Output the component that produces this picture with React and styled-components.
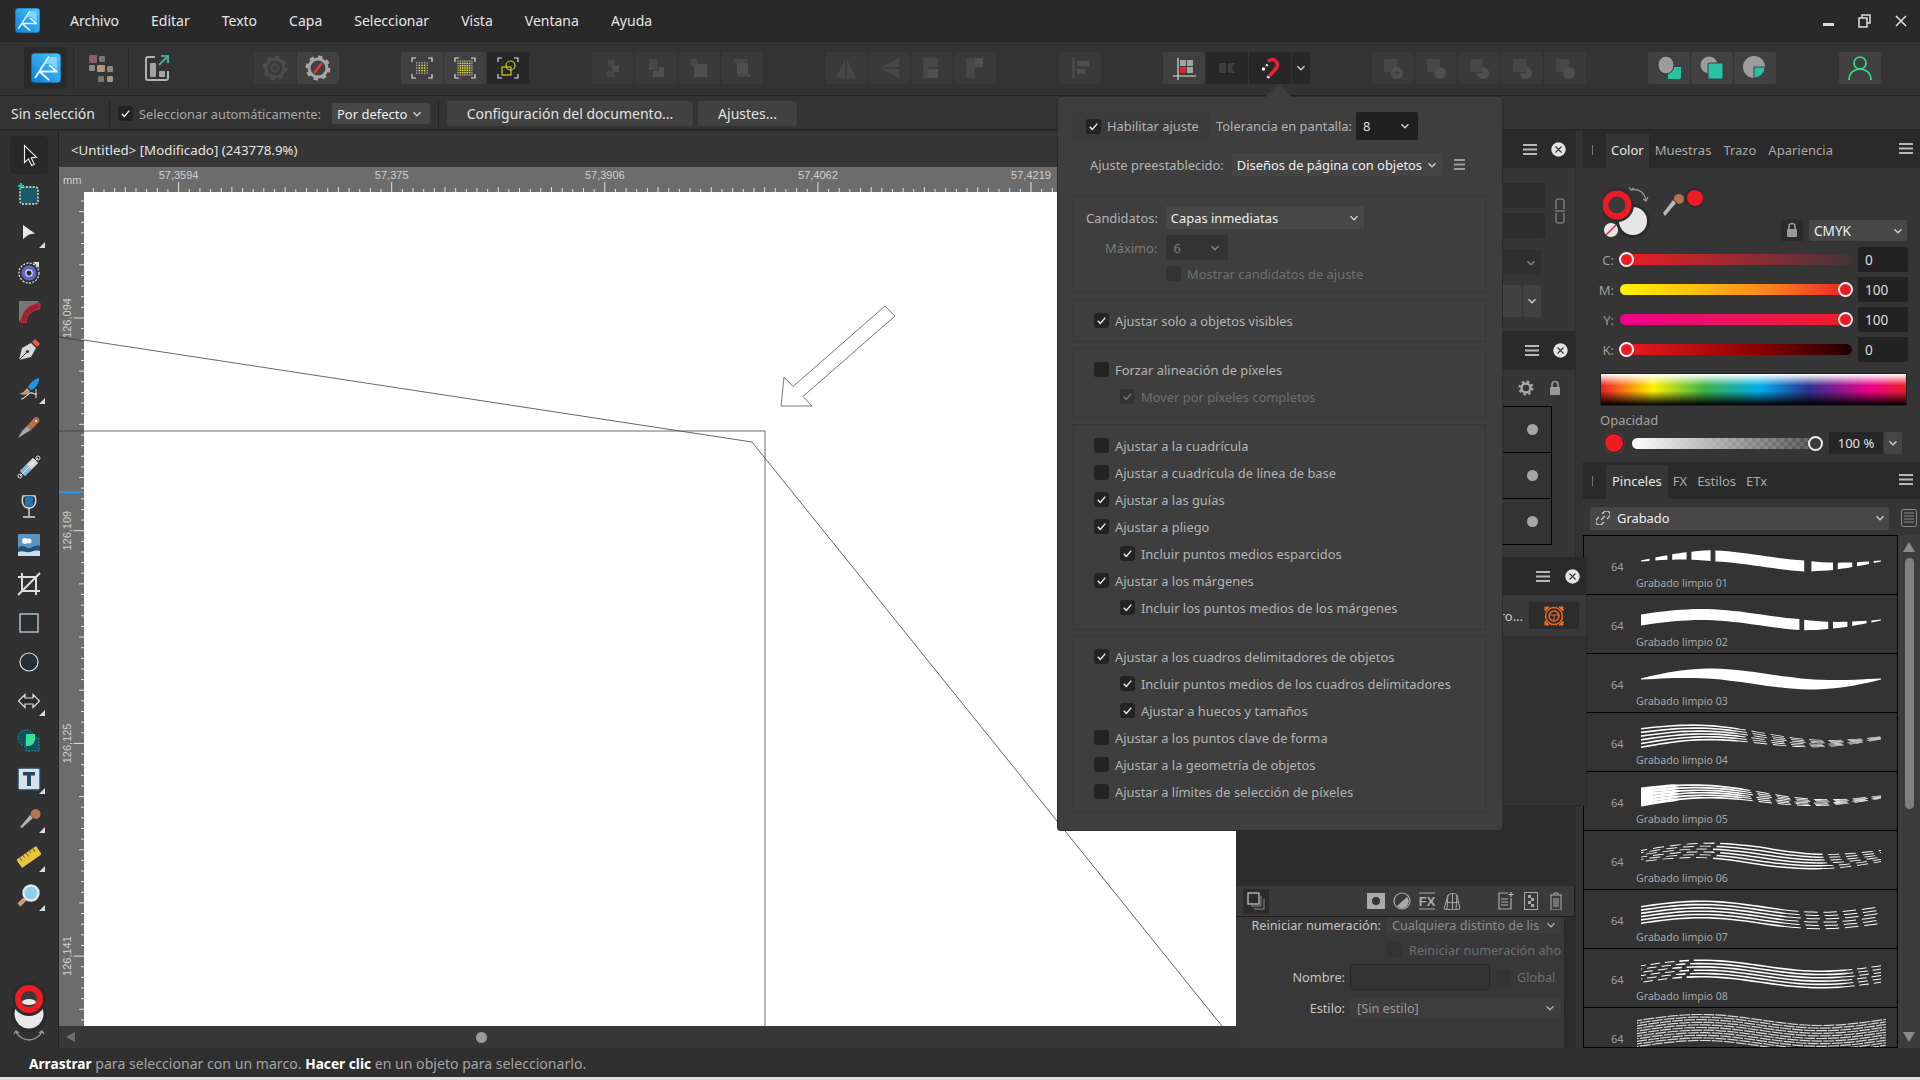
import React from "react";
import styled, { createGlobalStyle, css } from "styled-components";

const FONT = `"Noto Sans", "Open Sans", "Liberation Sans", sans-serif`;

const Global = createGlobalStyle`
  html, body { margin: 0; padding: 0; background: #333; overflow: hidden; }
  * { box-sizing: border-box; }
  body { font-family: ${FONT}; }
`;

const Page = styled.div`
  position: relative; width: 1920px; height: 1080px; overflow: hidden;
  display: flex; flex-direction: column; background: #333; color: #c8c8c8;
  font-family: ${FONT}; font-size: 12.9px;
`;

/* ---------- title bar ---------- */
const TitleBar = styled.header`
  height: 41px; flex: none; background: #292929; display: flex; align-items: center; padding-left: 15px;
`;
const Menu = styled.nav`
  display: flex; gap: 32px; margin-left: 30px; font-size: 14px; color: #e6e6e6;
`;
const WindowButtons = styled.div`
  margin-left: auto; display: flex; align-items: center; gap: 22px; padding-right: 12px;
`;

/* ---------- tool bar ---------- */
const Toolbar = styled.div`
  height: 55px; flex: none; background: #333; border-top: 1px solid #242424; border-bottom: 1px solid #222;
  display: flex; align-items: center; padding: 0 0 1px 24px;
`;
const BrandCell = styled.div`
  width: 43px; height: 42px; background: #2a2a2a; border-radius: 3px; display: flex; align-items: center; justify-content: center;
`;
const ToolSep = styled.div`
  width: 1px; height: 42px; background: #282828; margin: 0 14px 0 6px;
  ${p => p.$wide && css`margin: 0 15px 0 14px;`}
`;
const Group = styled.div`
  display: flex; gap: 1px; margin-left: ${p => p.$ml || 0}px;
`;
const TB = styled.div`
  width: ${p => p.$w || 42}px; height: 32px; border-radius: 2px; display: flex; align-items: center; justify-content: center;
  background: ${p => (p.$v === "off" ? "#3a3a3a" : p.$v === "dark" ? "#272727" : "#404040")};
`;

/* ---------- context bar ---------- */
const ContextBar = styled.div`
  height: 35px; flex: none; background: #333; border-bottom: 2px solid #262626;
  display: flex; align-items: center; padding: 2px 0 0 11px; font-size: 14px;
`;
const CtxStrong = styled.span`
  width: 83px; flex: none; color: #e2e2e2; white-space: nowrap;
`;
const CtxAuto = styled.span`
  width: 182px; flex: none; margin-left: 6px; color: #a8a8a8; font-size: 12.8px; white-space: nowrap;
`;
const CtxSep = styled.div`
  width: 1px; height: 26px; background: #242424; margin: 0 ${p => p.$r || 8}px 0 ${p => p.$l || 8}px;
`;
const CtxBtn = styled.div`
  height: 25px; background: #414141; border-radius: 2px; display: flex; align-items: center; justify-content: center;
  width: ${p => p.$w}px; margin-left: ${p => p.$ml || 0}px; color: #e2e2e2;
`;
const Muted = styled.span`
  color: ${p => p.$c || "#a8a8a8"}; margin-left: ${p => p.$ml || 0}px; white-space: nowrap;
`;

/* ---------- common controls ---------- */
const Box = styled.span`
  width: 15px; height: 15px; flex: none; border-radius: 3px; background: ${p => (p.$dis ? "#333" : "#232323")};
  display: inline-flex; align-items: center; justify-content: center;
`;
const Select = styled.div`
  display: flex; align-items: center; justify-content: space-between; flex: none;
  width: ${p => p.$w}px; height: ${p => p.$h || 23}px; padding: 0 ${p => p.$pr || 7}px 0 ${p => p.$pl || 5}px;
  margin-left: ${p => p.$ml || 0}px; border-radius: 2px; white-space: nowrap; overflow: hidden;
  background: ${p => p.$bg || "#474747"}; color: ${p => p.$c || "#eee"}; font-size: ${p => p.$fs || 12.9}px;
`;
const Check = ({ on, dis }) => (
  <Box $dis={dis}>
    {on && <svg width="11" height="11" viewBox="0 0 11 11"><path d="M1.8 5.8 4.3 8.4 9.3 2.6" fill="none" stroke={dis ? "#777" : "#eee"} strokeWidth="1.4" /></svg>}
  </Box>
);
const Chev = ({ c = "#ccc", s = 12 }) => (
  <svg width={s} height={s} viewBox="0 0 12 12" style={{ flex: "none" }}><path d="M2.5 4.2 6 7.8 9.5 4.2" fill="none" stroke={c} strokeWidth="1.4" /></svg>
);
const Burger = ({ c = "#b8b8b8", w = 14 }) => (
  <svg width={w} height="13" viewBox="0 0 14 13" style={{ flex: "none" }} preserveAspectRatio="none"><path d="M0 2h14M0 6.5h14M0 11h14" stroke={c} strokeWidth="2" /></svg>
);
const CloseDot = () => (
  <svg width="15" height="15" viewBox="0 0 15 15" style={{ flex: "none" }}><circle cx="7.5" cy="7.5" r="7.2" fill="#e4e4e4" /><path d="M4.5 4.5l6 6M10.5 4.5l-6 6" stroke="#333" strokeWidth="1.1" /></svg>
);

/* ---------- main ---------- */
const Main = styled.main`
  height: 917px; flex: none; display: flex; min-height: 0;
`;
const Tools = styled.aside`
  width: 59px; flex: none; background: #313131; border-right: 1px solid #232323; display: flex; flex-direction: column; align-items: center;
  padding-top: 5px; gap: 1px; padding-right: 1px;
`;
const ToolBtn = styled.div`
  position: relative; width: 38px; height: 38px; flex: none; border-radius: 4px; display: flex; align-items: center; justify-content: center;
  background: ${p => (p.$sel ? "#282828" : "transparent")};
  ${p => p.$fly && css`&::after {
    content: ""; position: absolute; right: 3px; bottom: 4px; width: 0; height: 0;
    border-left: 6px solid transparent; border-bottom: 6px solid #dcdcdc;
  }`}
`;
const ColorWell = styled.div`
  margin-top: auto; margin-bottom: 6px;
`;
const Center = styled.section`
  width: 1177px; flex: none; display: flex; flex-direction: column;
`;
const DocTab = styled.div`
  height: 36px; flex: none; background: #363636; display: flex; align-items: center; padding: 1px 0 0 12px; font-size: 13.3px; color: #e4e4e4;
`;
const RulerTop = styled.div`
  height: 25px; flex: none; background: #6c6c6c;
`;
const CanvasRow = styled.div`
  flex: 1; display: flex; min-height: 0;
`;
const RulerLeft = styled.div`
  width: 25px; flex: none; background: #6c6c6c;
`;
const Sheet = styled.div`
  flex: 1; background: #fff;
`;
const HScroll = styled.div`
  height: 22px; flex: none; background: #373737; display: flex; align-items: center; padding-left: 7px;
`;
const ScrollDot = styled.span`
  width: 11px; height: 11px; border-radius: 50%; background: #9a9a9a; margin-left: 401px;
`;

/* ---------- mid panels ---------- */
const Mid = styled.section`
  width: 339px; flex: none; display: flex; flex-direction: column; background: #2c2c2c;
`;
const PanelHead = styled.div`
  height: ${p => p.$h || 37}px; flex: none; background: #2a2a2a; display: flex; align-items: center; justify-content: flex-end; gap: 14px; padding-right: ${p => p.$pr || 7}px;
`;
const TransformBody = styled.div`
  height: 163px; flex: none; background: #363636; display: flex; flex-direction: column; align-items: flex-end; padding: 15px 34px 0 0; gap: 5px;
`;
const InputBlock = styled.div`
  display: flex; align-items: center; gap: 10px; margin-right: -24px;
`;
const InputStack = styled.div`
  display: flex; flex-direction: column; gap: 5px;
`;
const DarkInput = styled.div`
  width: 160px; height: 25px; background: #2d2d2d; border-radius: 2px;
`;
const SmallSelect = styled.div`
  width: 160px; height: 25px; margin-top: 7px; background: #2f2f2f; border-radius: 2px; display: flex; align-items: center; justify-content: flex-end; padding-right: 4px;
`;
const SplitBtn = styled.div`
  display: flex; gap: 1px; margin-top: 5px;
`;
const SplitPart = styled.div`
  height: 32px; width: ${p => p.$w}px; background: #414141; border-radius: 2px; display: flex; align-items: center; justify-content: center;
`;
const LayerBar = styled.div`
  height: 36px; flex: none; background: #363636; display: flex; align-items: center; justify-content: flex-end; gap: 14px; padding-right: 13px;
`;
const LayerList = styled.div`
  height: 151px; flex: none; background: #363636; padding-right: 23px;
`;
const LayerRow = styled.div`
  height: 46px; background: #333; border: 1px solid #000; border-bottom: none; border-left: none;
  display: flex; align-items: center; justify-content: flex-end; padding-right: 13px;
  &:last-child { border-bottom: 1px solid #000; height: 47px; }
`;
const LayerDot = styled.span`
  width: 11px; height: 11px; border-radius: 50%; background: #a6a6a6;
`;
const Filler = styled.div`
  flex: 1; background: #2c2c2c;
`;
const BottomBar = styled.div`
  height: 31px; flex: none; background: #3a3a3a; border-bottom: 1px solid #1e1e1e; border-right: 1px solid #1e1e1e; display: flex; align-items: center; padding-left: 7px;
`;
const BarIcon = styled.span`
  width: ${p => p.$w || 26}px; height: 25px; margin-left: ${p => p.$ml || 0}px; display: flex; align-items: center; justify-content: center;
  background: ${p => p.$bg || "transparent"};
`;
const FormArea = styled.div`
  height: 131px; flex: none; width: 329px; background: #383838; display: flex; flex-direction: column; border-right: 1px solid #2a2a2a; font-size: 12.7px;
`;
const FormRow = styled.div`
  display: flex; align-items: center; margin-top: ${p => p.$mt || 0}px; height: ${p => p.$h}px; padding-left: ${p => p.$pl || 0}px;
`;
const FormLabel = styled.span`
  width: ${p => p.$w}px; text-align: right; flex: none; color: #c4c4c4; margin-right: 5px; white-space: nowrap;
`;
const NameInput = styled.div`
  width: 140px; height: 26px; background: #333; border: 1px solid #272727; border-radius: 3px; margin-right: 6px;
`;
const Gutter = styled.div`
  width: 8px; flex: none; background: #333; border-left: 1px solid #2c2c2c;
`;

/* floating panel that lies over the others */
const FloatPanel = styled.div`
  position: absolute; left: 1236px; top: 557px; width: 351px; height: 249px; background: #323232; border-right: 1px solid #2a2a2a; border-bottom: 1px solid #2a2a2a;
`;
const FloatHead = styled.div`
  height: 38px; background: #2a2a2a; display: flex; align-items: center; justify-content: flex-end; gap: 15px; padding-right: 6px;
`;
const FloatRow = styled.div`
  height: 41px; background: #393939; display: flex; align-items: center; justify-content: flex-end; padding-right: 7px; gap: 6px; color: #c8c8c8;
`;
const OrangeBtn = styled.div`
  width: 50px; height: 27px; background: #2c2c2c; border-radius: 2px; display: flex; align-items: center; justify-content: center;
`;

/* ---------- right panels ---------- */
const Right = styled.section`
  width: 337px; flex: none; display: flex; flex-direction: column; background: #353535;
`;
const TabBar = styled.div`
  height: 37px; flex: none; background: #2a2a2a; display: flex; align-items: flex-end; padding-left: 9px; padding-right: 7px; font-size: 13px;
  color: #a9a9a9;
`;
const Pipe = styled.span`
  width: 1px; height: 10px; background: #777; margin: 0 13px 13px 0;
`;
const Tab = styled.span`
  height: 34px; display: flex; align-items: center; padding: 0 ${p => p.$px || 5}px 2px; white-space: nowrap;
  ${p => p.$on && css`background: #353535; color: #e6e6e6;`}
`;
const TabBurger = styled.span`
  margin-left: auto; align-self: center;
`;
const ColorBody = styled.div`
  height: 294px; flex: none; display: flex; flex-direction: column; padding-top: 5px;
`;
const WellRow = styled.div`
  height: 74px; flex: none; display: flex; align-items: flex-end; padding-left: 20px; padding-right: 13px;
`;
const LockCell = styled.div`
  width: 22px; height: 22px; background: #2b2b2b; margin: 0 6px 6px auto; display: flex; align-items: center; justify-content: center;
`;
const SliderRow = styled.div`
  height: 25px; margin-bottom: 5px; flex: none; display: flex; align-items: center;
`;
const SliderLabel = styled.span`
  width: 31px; text-align: right; color: #9c9c9c; margin-right: 6px; font-size: 13px;
`;
const Track = styled.div`
  position: relative; width: ${p => p.$w || 232}px; height: 11px; border-radius: 6px; background: ${p => p.$bg};
`;
const Thumb = styled.span`
  position: absolute; top: -2px; width: 15px; height: 15px; border-radius: 50%; border: 2px solid #eee; background: ${p => p.$bg || "#ed1c24"};
  left: ${p => p.$x}px;
`;
const ValueBox = styled.div`
  width: 50px; height: 25px; margin-left: 6px; background: #222; border-radius: 2px; color: #ddd; display: flex; align-items: center; padding-left: 7px; font-size: 13.6px;
`;
const Spectrum = styled.div`
  width: 307px; height: 33px; margin: 6px 0 0 17px; flex: none; border: 1px solid #222;
  background:
    linear-gradient(to bottom, #fff 0%, rgba(255,255,255,0) 38%, rgba(0,0,0,0) 55%, #000 100%),
    linear-gradient(to right, #ed1c24 0%, #fff200 17%, #3cb44a 34%, #00adef 52%, #2e3192 68%, #ec008c 88%, #ed1c24 100%);
`;
const OpacityLabel = styled.div`
  height: 18px; margin: 5px 0 3px 17px; color: #a4a4a4; font-size: 13px; line-height: 18px;
`;
const OpacityRow = styled.div`
  display: flex; align-items: center; height: 22px; padding-left: 21px; flex: none;
`;
const Swatch = styled.span`
  width: 20px; height: 20px; border-radius: 50%; background: #ed1c24; border: 1px solid #222; box-shadow: 0 0 0 1px #444; flex: none;
`;
const Checker = styled.div`
  position: relative; width: 190px; height: 11px; margin-left: 8px; border-radius: 6px;
  background:
    linear-gradient(to right, #fff, rgba(255,255,255,0)),
    repeating-conic-gradient(#5a5a5a 0 25%, #444 0 50%) 0 0 / 8px 8px;
`;
const OpacityValue = styled.div`
  width: 54px; height: 22px; margin-left: 7px; background: #262626; color: #e2e2e2; display: flex; align-items: center; justify-content: center; font-size: 13px;
`;
const OpacityChev = styled.div`
  width: 18px; height: 22px; margin-left: 1px; background: #454545; border-radius: 2px; display: flex; align-items: center; justify-content: center;
`;
const BrushSelectRow = styled.div`
  height: 36px; flex: none; display: flex; align-items: center; padding: 2px 0 0 7px; gap: 12px;
`;
const BrushSelect = styled.div`
  width: 299px; height: 23px; background: #474747; border-radius: 2px; display: flex; align-items: center; padding: 0 3px 0 6px; color: #eee; gap: 7px;
`;
const BrushArea = styled.div`
  flex: 1; display: flex; min-height: 0;
`;
const BrushList = styled.div`
  width: 315px; flex: none; border: 1px solid #000; background: #333; overflow: hidden;
`;
const BrushRow = styled.div`
  position: relative; height: 59px; border-bottom: 1px solid #000; overflow: hidden;
  &:last-child { border-bottom: none; }
`;
const BrushSvg = styled.svg`
  position: absolute; left: 53px; top: 0;
`;
const BrushSize = styled.span`
  position: absolute; left: 27px; top: 24px; color: #9aa2a6; font-size: 11px; line-height: 14px;
`;
const BrushName = styled.span`
  position: absolute; left: 52px; top: 40px; color: #a8a8a8; font-size: 10.6px; line-height: 15px; white-space: nowrap;
`;
const VScroll = styled.div`
  flex: 1; background: #3c3c3c; display: flex; flex-direction: column; align-items: center; padding-top: 7px;
`;
const VThumb = styled.div`
  width: 9px; height: 251px; border-radius: 5px; background: #808080; margin: 6px 0 223px;
`;

/* ---------- status ---------- */
const Status = styled.footer`
  height: 29px; flex: none; background: #2f2f2f; display: flex; align-items: center; padding: 1px 0 0 29px; font-size: 14.1px; color: #a4a4a4; white-space: pre;
`;
const StrongW = styled.b`
  color: #fff; font-weight: 700; font-size: 13.7px;
`;
const BottomStrip = styled.div`
  height: 3px; flex: none; background: #dedede;
`;

/* ---------- snapping popup ---------- */
const Popup = styled.div`
  position: absolute; left: 1058px; top: 97px; width: 444px; height: 733px; background: #3e3e3e; border-radius: 3px;
  box-shadow: 0 0 0 1px #2c2c2c; padding: 15px 16px 0 15px; color: #b4b4b4; font-size: 12.9px;
  &::before {
    content: ""; position: absolute; left: 207px; top: -13px; width: 0; height: 0;
    border-left: 14px solid transparent; border-right: 12px solid transparent; border-bottom: 13px solid #3e3e3e;
  }
`;
const PopRow1 = styled.div`
  display: flex; align-items: center; height: 28px;
`;
const EnableCell = styled.div`
  width: 137px; height: 28px; background: #3b3b3b; display: flex; align-items: center; padding-left: 13px; gap: 6px; margin-right: 6px; white-space: nowrap;
`;
const PopRow2 = styled.div`
  display: flex; align-items: center; height: 23px; margin-top: 13px; padding-left: 17px;
`;
const SectionBox = styled.div`
  border: 1px solid #373737; margin-top: ${p => p.$mt || 6}px; padding: ${p => (p.$pad === undefined ? 7 : p.$pad)}px 0; height: ${p => p.$h ? p.$h + "px" : "auto"};
`;
const OptRow = styled.div`
  height: 27px; display: flex; align-items: center; gap: 6px; padding-left: ${p => (p.$sub ? 46 : 20)}px; white-space: nowrap;
  color: ${p => (p.$dis ? "#6f6f6f" : "#b4b4b4")};
`;
const CandRow = styled.div`
  display: flex; align-items: center; height: ${p => p.$h}px; margin-top: ${p => p.$mt || 0}px; padding-left: ${p => p.$pl}px; color: ${p => p.$c || "#b4b4b4"}; white-space: nowrap;
`;

/* ---------- drawings ---------- */
const S = ({ w = 24, h = 24, vb, children }) => (
  <svg width={w} height={h} viewBox={vb || `0 0 ${w} ${h}`} style={{ flex: "none", display: "block" }}>{children}</svg>
);

const Logo = ({ size = 30 }) => (
  <svg width={size} height={size} viewBox="0 0 30 30" style={{ flex: "none" }}>
    <defs><linearGradient id="lg" x1="0" y1="1" x2="1" y2="0"><stop offset="0" stopColor="#0e7fd8" /><stop offset="1" stopColor="#4cc8ff" /></linearGradient></defs>
    <rect width="30" height="30" rx="4" fill="url(#lg)" stroke="#164e80" strokeWidth="1" />
    <path d="M4 25 18 3.5M8.5 18.5 H26.5M8.5 18.5 18 27M18 12 26 18.5" fill="none" stroke="#eaf7ff" strokeWidth="1.8" />
    <path d="M19 4h7v12l-7-5.5-6 1z" fill="#8ad8ff" opacity=".9" />
  </svg>
);
const Persona = () => (
  <S w={26} h={30}>
    {[[1, 2, "#8d5e68", 8, 8], [11, 3, "#777", 6, 6], [1, 12, "#8a8a8a", 6, 6], [9, 12, "#b09878", 8, 7], [19, 13, "#8a8a8a", 6, 6], [10, 23, "#777", 6, 6], [19, 23, "#a89a80", 6, 6]].map(([x, y, c, w, h], i) => (
      <rect key={i} x={x} y={y} width={w} height={h} rx="1.2" fill={c} />
    ))}
  </S>
);
const ExportI = () => (
  <S w={26} h={30}>
    <path d="M11 4H4a2 2 0 0 0-2 2v19a2 2 0 0 0 2 2h18a2 2 0 0 0 2-2v-7" fill="none" stroke="#aeb2bd" strokeWidth="2" />
    <rect x="6" y="10" width="6" height="14" rx="1" fill="#a4a4a4" />
    <rect x="15" y="18" width="6" height="6" rx="1" fill="#a4a4a4" />
    <path d="M15 12 23 4M17 3h7v7" fill="none" stroke="#4ba798" strokeWidth="2.2" />
  </S>
);
const Gear = ({ c, slash }) => (
  <S w={26} h={26}>
    <circle cx="13" cy="13" r="9" fill="none" stroke={c} strokeWidth="3" />
    <circle cx="13" cy="13" r="11" fill="none" stroke={c} strokeWidth="3" strokeDasharray="4.3 4.3" />
    {slash ? <path d="M9 18 17 8" stroke="#e8343f" strokeWidth="2.4" /> : <circle cx="13" cy="13" r="3.5" fill="none" stroke={c} strokeWidth="2" />}
  </S>
);
const Corners = () => (
  <path d="M1 5V1h4M17 1h4v4M21 17v4h-4M5 21H1v-4" transform="translate(1 1)" fill="none" stroke="#ddd" strokeWidth="1.2" />
);
const SnapGrid = ({ n, pitch, yel }) => {
  const d = [];
  const o = 12 - ((n - 1) * pitch) / 2;
  for (let i = 0; i < n; i++) for (let j = 0; j < n; j++) {
    const inner = yel(i, j);
    d.push(<rect key={`${i}-${j}`} x={o + i * pitch - 0.75} y={o + j * pitch - 0.75} width="1.5" height="1.5" fill={inner ? "#e2ea2c" : "#9a9a9a"} />);
  }
  return <S w={24} h={24}><Corners />{d}</S>;
};
const SnapObj = () => (
  <S w={24} h={24}><Corners />
    <rect x="6" y="11" width="9" height="8" fill="none" stroke="#c8d02a" strokeWidth="1.2" />
    <circle cx="14.5" cy="9.5" r="4.5" fill="none" stroke="#c8d02a" strokeWidth="1.2" />
  </S>
);
const Off = ({ i }) => {
  const c = "#474747"; const c2 = "#4f4f4f";
  const shapes = [
    <g key="a"><rect x="7" y="4" width="7" height="7" fill={c} /><rect x="11" y="10" width="7" height="6" fill={c2} /><rect x="6" y="15" width="7" height="6" fill={c} /></g>,
    <g key="b"><rect x="5" y="3" width="9" height="11" fill={c} /><path d="M15 11h5v10H9v-6h6z" fill={c2} /></g>,
    <g key="c"><rect x="4" y="3" width="6" height="8" fill={c} /><rect x="7" y="8" width="13" height="13" fill={c2} /></g>,
    <g key="d"><rect x="4" y="3" width="13" height="4" fill={c} /><rect x="7" y="7" width="11" height="11" fill={c2} /><rect x="8" y="18" width="13" height="3" fill={c} /></g>,
    <path key="e" d="M11 3v19H2zM13 3l9 19h-9z" fill={c} />,
    <path key="f" d="M22 2v9H4zM22 13v9L4 13z" fill={c} />,
    <g key="g"><rect x="8" y="2" width="10" height="9" fill={c} /><rect x="8" y="13" width="10" height="9" fill={c2} /><rect x="3" y="2" width="5" height="20" fill={c} /></g>,
    <g key="h"><rect x="3" y="2" width="9" height="20" fill={c} /><rect x="12" y="2" width="8" height="9" fill={c2} /></g>,
    <g key="i"><rect x="4" y="2" width="3" height="20" fill={c} /><rect x="9" y="5" width="12" height="5" fill={c2} /><rect x="9" y="13" width="8" height="5" fill={c2} /></g>,
    <g key="j"><rect x="3" y="3" width="13" height="13" rx="1" fill={c} /><circle cx="16" cy="17" r="6" fill={c2} /><path d="M13 17h6M16 14v6" stroke="#3a3a3a" /></g>,
    <g key="k"><rect x="3" y="3" width="13" height="13" rx="1" fill={c} /><circle cx="16" cy="17" r="6" fill={c2} /></g>,
    <g key="l"><rect x="3" y="3" width="13" height="13" rx="1" fill={c} /><path d="M16 11a6 6 0 1 1-6 6h6z" fill={c2} /></g>,
    <g key="m"><rect x="3" y="3" width="13" height="13" rx="1" fill={c} /><path d="M16 16v-5a6 6 0 1 1-6 6h6z" fill={c2} /></g>,
    <g key="n"><rect x="3" y="3" width="13" height="13" rx="1" fill={c} /><circle cx="16" cy="17" r="6" fill={c2} /></g>,
    <path key="o" d="M4 7h7v10H4zM13 7h7l-3.5 5L20 17h-7z" fill="#3f3f3f" />,
  ];
  return <S w={24} h={24}>{shapes[i]}</S>;
};
const SnapPanel = () => (
  <S w={24} h={24}>
    <path d="M6 2v22M1 20h23" stroke="#ddd" strokeWidth="1.2" fill="none" />
    <rect x="8" y="4" width="6" height="6" fill="#a4a4a4" /><rect x="15" y="4" width="6" height="6" fill="#a4a4a4" />
    <rect x="8" y="11" width="6" height="6" fill="#e8203a" /><rect x="15" y="11" width="6" height="6" fill="#a4a4a4" />
  </S>
);
const Magnet = () => (
  <S w={24} h={24}>
    <path d="M17 4.5a5.5 5.5 0 0 1 1.5 7.5l-7 8" fill="none" stroke="#ea2231" strokeWidth="3.6" />
    <path d="M17 4.5a5.5 5.5 0 0 0-7 1" fill="none" stroke="#ea2231" strokeWidth="3.6" />
    <circle cx="5.5" cy="13" r="1.7" fill="#fff" /><path d="M8 8.5l1.8 1.6M9 20.5l2.5 1.3" stroke="#eee" strokeWidth="2" />
  </S>
);
const Combine = ({ v }) => (
  <S w={28} h={28}>
    {v === 0 && <g><path d="M13 13h13v10a2 2 0 0 1-2 2H13z" fill="#27c2a2" /><ellipse cx="11" cy="11" rx="8" ry="9" fill="#9c9c9c" stroke="#333" /></g>}
    {v === 1 && <g><circle cx="11" cy="11" r="8.5" fill="#9c9c9c" /><rect x="10" y="9" width="15" height="16" rx="1" fill="#27c2a2" stroke="#3f3f3f" /></g>}
    {v === 2 && <g><circle cx="13" cy="13" r="11" fill="#9c9c9c" /><path d="M13 13h11a11 11 0 0 1-11 11z" fill="#27c2a2" stroke="#3f3f3f" /></g>}
  </S>
);
const User = () => (
  <S w={26} h={26}>
    <circle cx="13" cy="8" r="6" fill="none" stroke="#2fe08a" strokeWidth="1.6" />
    <path d="M2 25c0-7 5-11 11-11s11 4 11 11" fill="none" stroke="#2fe08a" strokeWidth="1.6" />
  </S>
);
const WinMin = () => <S w={14} h={14}><rect x="1" y="9" width="11" height="3" fill="#ddd" /></S>;
const WinMax = () => <S w={14} h={14}><rect x="1" y="4" width="8" height="9" fill="none" stroke="#ddd" strokeWidth="1.5" /><path d="M4 4V1h8v8h-3" fill="none" stroke="#ddd" strokeWidth="1.5" /></S>;
const WinClose = () => <S w={14} h={14}><path d="M2 2l10 10M12 2 2 12" stroke="#e4e4e4" strokeWidth="1.5" /></S>;

const ToolIcon = ({ n }) => {
  const I = {
    move: <path d="M7.5 2.5v17l4-3.6 3.2 6.6 2.6-1.2-3.1-6.5 5.3-.5z" fill="#1e1e1e" stroke="#eee" strokeWidth="1.1" />,
    board: <g><rect x="3" y="5" width="18" height="17" rx="2.5" fill="#1d5a68" stroke="#e6e6e6" strokeWidth="1.4" strokeDasharray="2 1.4" /><path d="M4 1v6M1 4h6" stroke="#2bc39b" strokeWidth="2" /></g>,
    node: <path d="M6 4 18 12.500 12 13.500 6 18z" fill="#e8e8e8" />,
    contour: <g><circle cx="12" cy="13" r="10" fill="none" stroke="#ddd" strokeWidth="1.3" strokeDasharray="2 1.4" /><circle cx="12" cy="13" r="7.5" fill="#6066d0" /><circle cx="12" cy="13" r="3.2" fill="#2a2a2a" stroke="#e2e2e2" strokeWidth="1.3" /><path d="M16 2h6v6z" fill="#dcdcdc" /></g>,
    corner: <g><path d="M2 23V2h20" fill="#777" /><path d="M4 24C4 13 11 5 23 4v6C15 11 9 16 9 24z" fill="#9a2333" stroke="#d33" strokeWidth=".8" /></g>,
    pen: <g><path d="M15 4l3-3 5 5-3 3z" fill="#ef5a48" /><path d="M2 22 5 10l9-5 5 5-5 9z" fill="#d8d8d8" /><path d="M2 22 10 14" stroke="#333" strokeWidth="1" /><circle cx="10.500" cy="13.500" r="1.600" fill="#333" /></g>,
    brush: <g><path d="M22 1c1 5-4 11-8 12l-3-3c2-4 6-8 11-9z" fill="#1f94e6" /><path d="M10 11l3 3c-1 3-5 5-11 3 3-1 5-2 8-6z" fill="#c49a80" /><path d="M4 22c4 0 5-4 9-6 3-1 4 2 7 1" fill="none" stroke="#ddd" strokeWidth="1.1" /><path d="M19 12v9" stroke="#ddd" /></g>,
    knife: <g><path d="M22 3a3 3 0 0 0-5-1l-7 8 4 4 7-7a3 3 0 0 0 1-4z" fill="#b5704e" /><circle cx="19" cy="5" r="1" fill="#eee" /><path d="M10 10l4 4-5 3-8 5 4-7z" fill="#a8a8a8" /></g>,
    fill: <g><path d="M3 16 16 3l5 5L8 21z" fill="#e9b470" /><path d="M9.5 9.5 16 3l5 5-6.500 6.500z" fill="#d8d8d8" /><path d="M3 16l6.500-6.500 5 5L8 21z" fill="#7ab9dc" /><circle cx="21" cy="3" r="2" fill="none" stroke="#ddd" /><circle cx="3" cy="21" r="2" fill="none" stroke="#ddd" /><path d="M3 21 21 3" stroke="#eee" /></g>,
    glass: <g><path d="M6 2h12c2 6 0 12-6 12S4 8 6 2z" fill="none" stroke="#ddd" strokeWidth="1.4" /><path d="M8 2h8v10l-4 1-4-1z" fill="#2873a8" /><path d="M12 14v8M6 23h12" stroke="#ddd" strokeWidth="1.4" /></g>,
    image: <g><rect x="1" y="1" width="22" height="22" rx="1" fill="#5e93bd" /><path d="M1 15c4-4 7-1 10 0s7-4 12-2v10H1z" fill="#1c5378" /><path d="M1 19c5-2 8 1 12 0s6-2 10-1v5H1z" fill="#e2eef6" opacity=".9" /><circle cx="8" cy="8" r="3" fill="#f2f6fa" /><circle cx="12" cy="8" r="2.5" fill="#f2f6fa" /></g>,
    crop: <path d="M1 5h18v18M5 1v18h18M1 23 23 1" fill="none" stroke="#ddd" strokeWidth="2" />,
    rect: <rect x="3" y="3" width="18" height="18" fill="#272f33" stroke="#ddd" strokeWidth="1.2" />,
    circle: <circle cx="12" cy="12" r="9" fill="#272f33" stroke="#ddd" strokeWidth="1.2" />,
    stretch: <path d="M1.500 12 8 5.500V9h8V5.500l6.500 6.500-6.500 6.500V15H8v3.500z" fill="#2b2b2b" stroke="#ddd" strokeWidth="1.2" />,
    builder: <g><circle cx="9" cy="10" r="8" fill="#124f5e" stroke="#2d94ab" strokeDasharray="1.800 1.400" /><rect x="9" y="10" width="13" height="13" fill="#124f5e" stroke="#2d94ab" strokeDasharray="1.800 1.400" /><path d="M9 6h9v6a8 8 0 0 1-8 6H9z" fill="#33e39a" /></g>,
    text: <g><rect x="1" y="1" width="22" height="22" rx="1.5" fill="#d8e2e8" stroke="#1c4a66" strokeWidth="1.4" /><path d="M6 5h12v3.500h-4V19h-4V8.500H6z" fill="#1c4a66" /></g>,
    dropper: <g><path d="M3 21 13 9l3 3L5 22z" fill="#b0b0b0" /><path d="M14 10a5 5 0 1 1 4 3z" fill="#b5754f" /></g>,
    ruler: <g transform="rotate(-35 12 12)"><rect x="0" y="7" width="24" height="10" rx="1" fill="#e6c53c" /><path d="M4 7v4M8 7v3M12 7v4M16 7v3M20 7v4" stroke="#7a6514" strokeWidth="1" /></g>,
    zoom: <g><path d="M2 21 8 15" stroke="#cf9f6f" strokeWidth="4.5" /><circle cx="14" cy="9" r="7.500" fill="#8fd0f2" stroke="#e6e6e6" strokeWidth="2.4" /></g>,
  }[n];
  return <S w={24} h={24}>{I}</S>;
};

const TOOLS = [["move", 0], ["board", 0], ["node", 1], ["contour", 0], ["corner", 0], ["pen", 0], ["brush", 1], ["knife", 0], ["fill", 0], ["glass", 0], ["image", 0], ["crop", 0], ["rect", 0], ["circle", 0], ["stretch", 1], ["builder", 0], ["text", 1], ["dropper", 1], ["ruler", 1], ["zoom", 1]];

const HRuler = () => {
  const W = 1177, first = 119.6, step = 213.1, m = step / 20;
  const ticks = [];
  for (let i = -8; i < 120; i++) {
    const x = first + i * m;
    if (x < 25) continue;
    const k = ((i % 20) + 20) % 20;
    const h = k === 0 ? 10 : k % 5 === 0 ? 5 : k % 2 === 1 ? 3 : 4;
    ticks.push(<line key={i} x1={x} x2={x} y1={25 - h} y2={25} stroke="#e2e2e2" strokeWidth="1" />);
  }
  const labels = ["57,3594", "57,375", "57,3906", "57,4062", "57,4219"];
  return (
    <svg width={W} height="25" style={{ display: "block" }}>
      <text x="4" y="17" fill="#cfcfcf" fontFamily="Liberation Sans" fontSize="11">mm</text>
      {labels.map((l, i) => <text key={l} x={first + i * step} y="12" textAnchor="middle" fill="#cfcfcf" fontFamily="Liberation Sans" fontSize="11">{l}</text>)}
      {ticks}
    </svg>
  );
};
const VRuler = () => {
  const first = 126, step = 212.7, m = step / 20;
  const ticks = [];
  for (let i = -12; i < 70; i++) {
    const y = first + i * m;
    if (y < 0 || y > 834) continue;
    const k = ((i % 20) + 20) % 20;
    const h = k === 0 ? 10 : k % 5 === 0 ? 5 : 3;
    ticks.push(<line key={i} y1={y} y2={y} x1={25 - h} x2={25} stroke="#e2e2e2" strokeWidth="1" />);
  }
  const labels = ["126,094", "126,109", "126,125", "126,141"];
  return (
    <svg width="25" height="834" style={{ display: "block" }}>
      {ticks}
      <line x1="0" y1="145" x2="25" y2="149" stroke="#444" />
      <line x1="0" y1="239" x2="25" y2="239" stroke="#444" />
      <rect x="0" y="299.500" width="25" height="1.500" fill="#2a9bf0" />
      {labels.map((l, i) => {
        const y = first + i * step;
        return <text key={l} transform={`translate(12 ${y}) rotate(-90)`} textAnchor="middle" fill="#cfcfcf" fontFamily="Liberation Sans" fontSize="11">{l}</text>;
      })}
    </svg>
  );
};
const Drawing = () => (
  <svg width="1152" height="834" style={{ display: "block" }}>
    <path d="M0 239H681V834" fill="none" stroke="#6a6a6a" strokeWidth="1" />
    <path d="M0 148 668 250 1138 834" fill="none" stroke="#555" strokeWidth=".9" />
    <path d="M801 114 811 124 719 204.500 728 214 697 214 700 185 709 194.500z" fill="#fff" stroke="#777" strokeWidth="1" />
  </svg>
);

/* brush strokes */
const cy = t => 25 - 5.5 * Math.sin(2 * Math.PI * t);
const X = t => 4 + t * 240;
const strip = (t0, t1, off, wf) => {
  const top = [], bot = [];
  const n = Math.max(2, Math.ceil((t1 - t0) * 36));
  for (let i = 0; i <= n; i++) {
    const t = t0 + ((t1 - t0) * i) / n;
    const w = wf(t) / 2, o = off(t);
    top.push(`${X(t).toFixed(1)},${(cy(t) + o - w).toFixed(1)}`);
    bot.unshift(`${X(t).toFixed(1)},${(cy(t) + o + w).toFixed(1)}`);
  }
  return top.concat(bot).join(" ");
};
const zero = () => 0;
const tapered = t => (t < 0.3 ? 1 + (t / 0.3) * 10 : t > 0.68 ? 1 + 10 * (1 - (t - 0.68) / 0.32) : 11);
const dashes1 = [[0, .035], [.06, .11], [.13, .19], [.21, .29], [.31, .68], [.71, .8], [.82, .88], [.9, .95], [.97, 1]];
/* one line of a multi-line engraving stroke: one polygon for each solid stretch */
const lines = (n, spread, th, solid, pitch = 0.07, gap = 0.02, bodyStart = 0, bodyEnd = 1) => {
  const res = [];
  for (let k = 0; k < n; k++) {
    const f = k - (n - 1) / 2;
    const off = t => f * spread(t);
    let runStart = null;
    for (let t = bodyStart - 0.02 - (k % 3) * 0.015; t < bodyEnd;) {
      const sol = solid(t, k);
      if (sol) {
        if (runStart === null) runStart = Math.max(bodyStart, t);
        t += 0.02;
      } else {
        if (runStart !== null) { res.push(strip(runStart, t, off, x => th(x))); runStart = null; }
        const a = Math.max(bodyStart, t), b = Math.min(bodyEnd, t + pitch - gap);
        if (b > a) res.push(strip(a, b, off, x => th(x)));
        t += pitch;
      }
    }
    if (runStart !== null) res.push(strip(runStart, bodyEnd, off, x => th(x)));
  }
  return res;
};
const BRUSHES = [
  () => dashes1.map(([a, b]) => strip(a, b, zero, tapered)),
  () => [[0, .66], [.68, .78], [.8, .86], [.88, .94], [.96, 1]].map(([a, b]) => strip(a, b, zero, t => (t < .66 ? 11 : Math.max(1, 11 - (t - .66) * 30)))),
  () => [strip(0, 1, zero, t => 1 + 11 * Math.pow(Math.sin(Math.PI * t), 0.8))],
  () => lines(6, t => 3.7 - 3.2 * t, t => (t < .4 ? 1.6 : 1.2 - .7 * t), t => t < .38, .08, .024),
  () => [strip(0, .05, zero, () => 15)].concat(lines(6, t => 3.2 - 2.7 * t, t => (t < .15 ? 3 : t < .42 ? 1.7 : 1.4 - .8 * t), t => t < .4, .08, .024)),
  () => lines(6, t => 1.9 + 1.6 * (1 - Math.abs(t - .5) * 1.6), t => (t > .3 && t < .76 ? 1.5 : .9), (t, k) => t > .3 && t < .7 + k * .01, .07, .024),
  () => lines(6, t => 3.3, t => (t < .6 ? 1.6 : 1), t => t < .6, .08, .024),
  () => lines(6, t => 3.3, t => (t < .15 || t > .85 ? 1 : 1.6), t => t > .16 && t < .84, .06, .02),
  () => lines(11, t => 2.6, t => 1.2, () => false, .05, .005, -.02, 1.02),
];
const BrushRowItem = ({ i, build, last }) => {
  const polys = build();
  return (
    <BrushRow>
      <BrushSize>64</BrushSize>
      <BrushSvg width="252" height="58" viewBox="0 0 252 58">
        {polys.map((p, k) => <polygon key={k} points={p} fill={i === 8 ? "#d8d8d8" : "#fff"} />)}
      </BrushSvg>
      {!last && <BrushName>Grabado limpio 0{i + 1}</BrushName>}
    </BrushRow>
  );
};

const Triangle = ({ up, c = "#8a8a8a" }) => (
  <S w={12} h={10}><path d={up ? "M6 0l6 10H0z" : "M0 0h12L6 10z"} fill={c} /></S>
);
const LinkI = () => (
  <S w={10} h={26}><path d="M1 11V3a2 2 0 0 1 2-2h4a2 2 0 0 1 2 2v8M1 15v8a2 2 0 0 0 2 2h4a2 2 0 0 0 2-2v-8M0 13h10" fill="none" stroke="#9a9a9a" /></S>
);
const LockI = ({ c = "#9a9a9a" }) => (
  <S w={14} h={16}><path d="M4 7V4.500a3 3 0 0 1 6 0V7" fill="none" stroke={c} strokeWidth="1.6" /><rect x="2" y="7" width="10" height="8" rx="1" fill={c} /></S>
);
const GearI = () => (
  <S w={16} h={16}><circle cx="8" cy="8" r="4.500" fill="none" stroke="#aaa" strokeWidth="2.500" /><circle cx="8" cy="8" r="6.500" fill="none" stroke="#aaa" strokeWidth="2" strokeDasharray="2.500 2.600" /></S>
);

const WELL = (
  <S w={100} h={74}>
    <circle cx="30" cy="48" r="17" fill="#2b2b2b" />
    <circle cx="30" cy="48" r="14" fill="#e6e6e6" />
    <circle cx="8" cy="57" r="7.500" fill="#e6e6e6" stroke="#333" />
    <path d="M3 62 13 52" stroke="#e8203a" strokeWidth="1.500" />
    <path d="M28 17c8-2 14 3 15 11M26 14l2 3 3-2M45 24l-2 4-3-2" fill="none" stroke="#9a9a9a" strokeWidth="1.200" />
    <circle cx="14" cy="32" r="17" fill="#2d2d2d" />
    <circle cx="14" cy="32" r="11.500" fill="#3a3a3a" stroke="#ed1c24" strokeWidth="6" />
    <path d="M60 40 70 27l3 3-11 13z" fill="#b8b8b8" />
    <path d="M71 27a5 5 0 1 1 5 4z" fill="#b5754f" />
    <circle cx="92" cy="25" r="10" fill="#2b2b2b" />
    <circle cx="92" cy="25" r="8" fill="#ed1c24" />
  </S>
);

const SMALL_WELL = (
  <S w={44} h={68}>
    <circle cx="22" cy="40" r="18" fill="#2a2a2a" />
    <circle cx="22" cy="40" r="14.500" fill="#e8e8e8" />
    <circle cx="22" cy="25" r="17" fill="#2c2c2c" />
    <circle cx="22" cy="25" r="11" fill="#3a3a3a" stroke="#ed1c24" strokeWidth="6" />
    <ellipse cx="22" cy="28" rx="7" ry="3" fill="#e8e8e8" />
    <path d="M9 58c3 6 10 8 13 8s10-2 13-8M7 60l2-3 3 2M37 60l-2-3-3 2" fill="none" stroke="#9a9a9a" strokeWidth="1.300" />
  </S>
);

const OPTS3 = [
  { t: "Forzar alineación de píxeles" },
  { t: "Mover por píxeles completos", sub: 1, on: 1, dis: 1 },
];
const OPTS4 = [
  { t: "Ajustar a la cuadrícula" },
  { t: "Ajustar a cuadrícula de línea de base" },
  { t: "Ajustar a las guías", on: 1 },
  { t: "Ajustar a pliego", on: 1 },
  { t: "Incluir puntos medios esparcidos", on: 1, sub: 1 },
  { t: "Ajustar a los márgenes", on: 1 },
  { t: "Incluir los puntos medios de los márgenes", on: 1, sub: 1 },
];
const OPTS5 = [
  { t: "Ajustar a los cuadros delimitadores de objetos", on: 1 },
  { t: "Incluir puntos medios de los cuadros delimitadores", on: 1, sub: 1 },
  { t: "Ajustar a huecos y tamaños", on: 1, sub: 1 },
  { t: "Ajustar a los puntos clave de forma" },
  { t: "Ajustar a la geometría de objetos" },
  { t: "Ajustar a límites de selección de píxeles" },
];
const Opts = ({ items }) => items.map(o => (
  <OptRow key={o.t} $sub={o.sub} $dis={o.dis}><Check on={o.on} dis={o.dis} /><span>{o.t}</span></OptRow>
));

const SLIDERS = [
  { l: "C:", v: "0", x: -1, bg: "linear-gradient(to right,#ed1c24,#a32a2f 45%,#453437)" },
  { l: "M:", v: "100", x: 218, bg: "linear-gradient(to right,#fff200,#ffc20e 30%,#f58220 65%,#ed1c24)" },
  { l: "Y:", v: "100", x: 218, bg: "linear-gradient(to right,#ec008c,#ed145b 50%,#ed1c24)" },
  { l: "K:", v: "0", x: -1, bg: "linear-gradient(to right,#ed1c24,#8b0000 60%,#1f0000)" },
];

export default function App() {
  return (
    <Page>
      <Global />
      <TitleBar>
        <Logo size={25} />
        <Menu>
          {["Archivo", "Editar", "Texto", "Capa", "Seleccionar", "Vista", "Ventana", "Ayuda"].map(m => <span key={m}>{m}</span>)}
        </Menu>
        <WindowButtons><WinMin /><WinMax /><WinClose /></WindowButtons>
      </TitleBar>

      <Toolbar>
        <BrandCell><Logo size={30} /></BrandCell>
        <ToolSep />
        <Persona />
        <ToolSep $wide />
        <ExportI />
        <Group $ml={84}>
          <TB $v="off"><Gear c="#4c4c4c" /></TB>
          <TB><Gear c="#a6a6a6" slash /></TB>
        </Group>
        <Group $ml={62}>
          <TB><SnapGrid n={5} pitch={2.6} yel={(i, j) => i > 0 && i < 4 && j > 0 && j < 4} /></TB>
          <TB><SnapGrid n={7} pitch={2.3} yel={(i, j) => i > 0 && i < 6 && j > 0 && j < 6} /></TB>
          <TB $v="dark"><SnapObj /></TB>
        </Group>
        <Group $ml={63}>
          {[0, 1, 2, 3].map(i => <TB key={i} $v="off"><Off i={i} /></TB>)}
        </Group>
        <Group $ml={62}>
          {[4, 5, 6, 7].map(i => <TB key={i} $v="off"><Off i={i} /></TB>)}
        </Group>
        <Group $ml={63}>
          <TB $v="off"><Off i={8} /></TB>
        </Group>
        <Group $ml={62}>
          <TB><SnapPanel /></TB>
          <TB $v="dark"><Off i={14} /></TB>
          <TB $v="dark"><Magnet /></TB>
          <TB $v="dark" $w={18}><Chev /></TB>
        </Group>
        <Group $ml={62}>
          {[9, 10, 11, 12, 13].map(i => <TB key={i} $v="off"><Off i={i} /></TB>)}
        </Group>
        <Group $ml={62}>
          {[0, 1, 2].map(v => <TB key={v}><Combine v={v} /></TB>)}
        </Group>
        <Group $ml={63}><TB><User /></TB></Group>
      </Toolbar>

      <ContextBar>
        <CtxStrong>Sin selección</CtxStrong>
        <CtxSep $l={15} $r={8} />
        <Check on />
        <CtxAuto>Seleccionar automáticamente:</CtxAuto>
        <Select $w={98} $h={21} $ml={11} $pl={5} $fs={13}>Por defecto<Chev /></Select>
        <CtxSep $l={8} />
        <CtxBtn $w={246}>Configuración del documento...</CtxBtn>
        <CtxBtn $w={99} $ml={5}>Ajustes...</CtxBtn>
      </ContextBar>

      <Main>
        <Tools>
          {TOOLS.map(([n, f], i) => (
            <ToolBtn key={n} $sel={i === 0} $fly={!!f}><ToolIcon n={n} /></ToolBtn>
          ))}
          <ColorWell>{SMALL_WELL}</ColorWell>
        </Tools>

        <Center>
          <DocTab>&lt;Untitled&gt; [Modificado] (243778.9%)</DocTab>
          <RulerTop><HRuler /></RulerTop>
          <CanvasRow>
            <RulerLeft><VRuler /></RulerLeft>
            <Sheet><Drawing /></Sheet>
          </CanvasRow>
          <HScroll>
            <svg width="9" height="10" viewBox="0 0 9 10"><path d="M9 0v10L0 5z" fill="#6e6e6e" /></svg>
            <ScrollDot />
          </HScroll>
        </Center>

        <Mid>
          <PanelHead $pr={9}><Burger /><CloseDot /></PanelHead>
          <TransformBody>
            <InputBlock>
              <InputStack><DarkInput /><DarkInput /></InputStack>
              <LinkI />
            </InputBlock>
            <SmallSelect><Chev c="#888" /></SmallSelect>
            <SplitBtn>
              <SplitPart $w={80} />
              <SplitPart $w={18}><Chev /></SplitPart>
            </SplitBtn>
          </TransformBody>
          <PanelHead $h={39} $pr={7}><Burger /><CloseDot /></PanelHead>
          <LayerBar><GearI /><LockI /></LayerBar>
          <LayerList>
            {[0, 1, 2].map(i => <LayerRow key={i}><LayerDot /></LayerRow>)}
          </LayerList>
          <Filler />
          <BottomBar>
            <BarIcon $bg="#2c2c2c">
              <S w={18} h={18}><rect x="1" y="1" width="11" height="11" fill="none" stroke="#ccc" strokeWidth="1.200" /><path d="M14 4v10H4M17 7v10H7" fill="none" stroke="#888" /></S>
            </BarIcon>
            <BarIcon $ml={94} $w={26}>
              <S w={18} h={16}><rect width="18" height="16" fill="#aaa" /><circle cx="9" cy="8" r="4" fill="#333" /></S>
            </BarIcon>
            <BarIcon>
              <S w={18} h={18}><circle cx="9" cy="9" r="8" fill="none" stroke="#aaa" strokeWidth="1.200" /><path d="M4 14 14 5a6 6 0 0 1-10 9z" fill="#aaa" /></S>
            </BarIcon>
            <BarIcon $w={24}>
              <svg width="18" height="18" viewBox="0 0 18 18"><path d="M1 1h16M1 17h16" stroke="#aaa" /><text x="9" y="14" textAnchor="middle" fontSize="13" fontWeight="700" fill="#aaa" fontFamily="Liberation Sans">FX</text></svg>
            </BarIcon>
            <BarIcon>
              <S w={18} h={18}><path d="M1 17 5 3c4-2 7-2 9 0l3 14c-6 1-11 1-16 0zM5 3l-1 14M9.500 2v15M14 3l-1 14M3 10c4 1 9 1 13 0" fill="none" stroke="#aaa" /></S>
            </BarIcon>
            <BarIcon $ml={28} $w={25}>
              <S w={16} h={18}><path d="M10 1H1v16h12V6M3 7h7M3 10h7M3 13h7" fill="none" stroke="#aaa" strokeWidth="1.200" /><path d="M13 0v5M10.500 2.500h5" stroke="#ccc" /></S>
            </BarIcon>
            <BarIcon $w={25}>
              <S w={14} h={18}><rect x=".5" y=".5" width="13" height="17" fill="none" stroke="#aaa" /><path d="M4 3h3v3H4zM7 6h3v3H7zM4 9h3v3H4zM7 12h3v3H7z" fill="#aaa" /></S>
            </BarIcon>
            <BarIcon $w={25}>
              <S w={14} h={18}><path d="M1 3h12M5 3V1h4v2M2 3v15h10V3M5 6v9M7 6v9M9 6v9" fill="none" stroke="#aaa" /></S>
            </BarIcon>
          </BottomBar>
          <FormArea>
            <FormRow $h={16}>
              <FormLabel $w={145}>Reiniciar numeración:</FormLabel>
              <Select $w={175} $h={16} $bg="#3d3d3d" $c="#8c8c8c" $pl={6} $pr={4} $fs={12.7}>
                <span style={{ overflow: "hidden" }}>Cualquiera distinto de lis</span><Chev c="#aaa" />
              </Select>
            </FormRow>
            <FormRow $h={15} $mt={9} $pl={151}>
              <Check dis />
              <Muted $c="#6f6f6f" $ml={7}>Reiniciar numeración aho</Muted>
            </FormRow>
            <FormRow $h={26} $mt={7}>
              <FormLabel $w={109}>Nombre:</FormLabel>
              <NameInput />
              <Check dis />
              <Muted $c="#6f6f6f" $ml={6}>Global</Muted>
            </FormRow>
            <FormRow $h={22} $mt={7}>
              <FormLabel $w={109}>Estilo:</FormLabel>
              <Select $w={211} $h={22} $bg="#3d3d3d" $c="#9a9a9a" $pl={7} $pr={5} $fs={12.7}>[Sin estilo]<Chev c="#aaa" /></Select>
            </FormRow>
          </FormArea>
        </Mid>
        <Gutter />

        <Right>
          <TabBar>
            <Pipe />
            <Tab $on>Color</Tab>
            <Tab $px={6}>Muestras</Tab>
            <Tab $px={6}>Trazo</Tab>
            <Tab $px={6}>Apariencia</Tab>
            <TabBurger><Burger /></TabBurger>
          </TabBar>
          <ColorBody>
            <WellRow>
              {WELL}
              <LockCell><LockI /></LockCell>
              <Select $w={98} $h={21} $pl={5} $pr={3} $fs={13.6} style={{ marginBottom: 6 }}>CMYK<Chev /></Select>
            </WellRow>
            {SLIDERS.map(s => (
              <SliderRow key={s.l}>
                <SliderLabel>{s.l}</SliderLabel>
                <Track $bg={s.bg}><Thumb $x={s.x} /></Track>
                <ValueBox>{s.v}</ValueBox>
              </SliderRow>
            ))}
            <Spectrum />
            <OpacityLabel>Opacidad</OpacityLabel>
            <OpacityRow>
              <Swatch />
              <Checker><Thumb $x={176} $bg="#3a3a3a" /></Checker>
              <OpacityValue>100 %</OpacityValue>
              <OpacityChev><Chev /></OpacityChev>
            </OpacityRow>
          </ColorBody>
          <TabBar>
            <Pipe />
            <Tab $on $px={6}>Pinceles</Tab>
            <Tab>FX</Tab>
            <Tab>Estilos</Tab>
            <Tab>ETx</Tab>
            <TabBurger><Burger /></TabBurger>
          </TabBar>
          <BrushSelectRow>
            <BrushSelect>
              <S w={14} h={14}><path d="M5 9 9 5M6 3l2-2a3 3 0 0 1 5 5l-2 2M8 11l-2 2a3 3 0 0 1-5-5l2-2" fill="none" stroke="#ccc" strokeWidth="1.200" /></S>
              Grabado
              <span style={{ marginLeft: "auto", display: "flex" }}><Chev /></span>
            </BrushSelect>
            <S w={16} h={18}><rect x=".5" y=".5" width="15" height="17" rx="2" fill="none" stroke="#888" /><path d="M3 4h10M3 7h10M3 10h10M3 13h10" stroke="#888" /></S>
          </BrushSelectRow>
          <BrushArea>
            <BrushList>
              {BRUSHES.map((b, i) => <BrushRowItem key={i} i={i} build={b} last={i === 8} />)}
            </BrushList>
            <VScroll>
              <Triangle up />
              <VThumb />
              <Triangle />
            </VScroll>
          </BrushArea>
        </Right>
      </Main>

      <Status>
        <StrongW>Arrastrar</StrongW>{" para seleccionar con un marco. "}<StrongW>Hacer clic</StrongW>{" en un objeto para seleccionarlo."}
      </Status>
      <BottomStrip />

      <FloatPanel>
        <FloatHead><Burger /><CloseDot /></FloatHead>
        <FloatRow>
          <span>ro...</span>
          <OrangeBtn>
            <S w={20} h={20}>
              <circle cx="10" cy="10" r="8.500" fill="none" stroke="#ef6a27" strokeWidth="1.500" />
              <circle cx="10" cy="10" r="5" fill="none" stroke="#ef6a27" strokeWidth="1.500" />
              <path d="M6 9h8M10 9v5M1 1h4L1 5zM19 1h-4l4 4zM1 19h4l-4-4zM19 19h-4l4-4z" fill="#ef6a27" stroke="#ef6a27" />
            </S>
          </OrangeBtn>
        </FloatRow>
      </FloatPanel>

      <Popup>
        <PopRow1>
          <EnableCell><Check on /><span>Habilitar ajuste</span></EnableCell>
          <span style={{ whiteSpace: "nowrap" }}>Tolerancia en pantalla:</span>
          <Select $w={62} $h={28} $ml={4} $bg="#202020" $c="#ddd" $pl={7}>8<Chev /></Select>
        </PopRow1>
        <PopRow2>
          <span style={{ whiteSpace: "nowrap" }}>Ajuste preestablecido:</span>
          <Select $w={210} $ml={8} $bg="#444" $pr={4}>Diseños de página con objetos<Chev /></Select>
          <span style={{ marginLeft: 12, display: "flex" }}><Burger c="#9a9a9a" w={11} /></span>
        </PopRow2>
        <SectionBox $mt={19} $pad={0} $h={98}>
          <CandRow $h={23} $mt={10} $pl={12}>
            <span>Candidatos:</span>
            <Select $w={198} $ml={8} $bg="#474747" $pr={4}>Capas inmediatas<Chev /></Select>
          </CandRow>
          <CandRow $h={25} $mt={6} $pl={31} $c="#7a7a7a">
            <span>Máximo:</span>
            <Select $w={62} $h={25} $ml={9} $bg="#333" $c="#7a7a7a" $pl={7}>6<Chev c="#888" /></Select>
          </CandRow>
          <CandRow $h={15} $mt={6} $pl={92} $c="#6f6f6f">
            <Check dis />
            <span style={{ marginLeft: 6 }}>Mostrar candidatos de ajuste</span>
          </CandRow>
        </SectionBox>
        <SectionBox $pad={7} $h={43}><Opts items={[{ t: "Ajustar solo a objetos visibles", on: 1 }]} /></SectionBox>
        <SectionBox $h={70}><Opts items={OPTS3} /></SectionBox>
        <SectionBox $h={206}><Opts items={OPTS4} /></SectionBox>
        <SectionBox $mt={5} $h={178}><Opts items={OPTS5} /></SectionBox>
      </Popup>
    </Page>
  );
}
